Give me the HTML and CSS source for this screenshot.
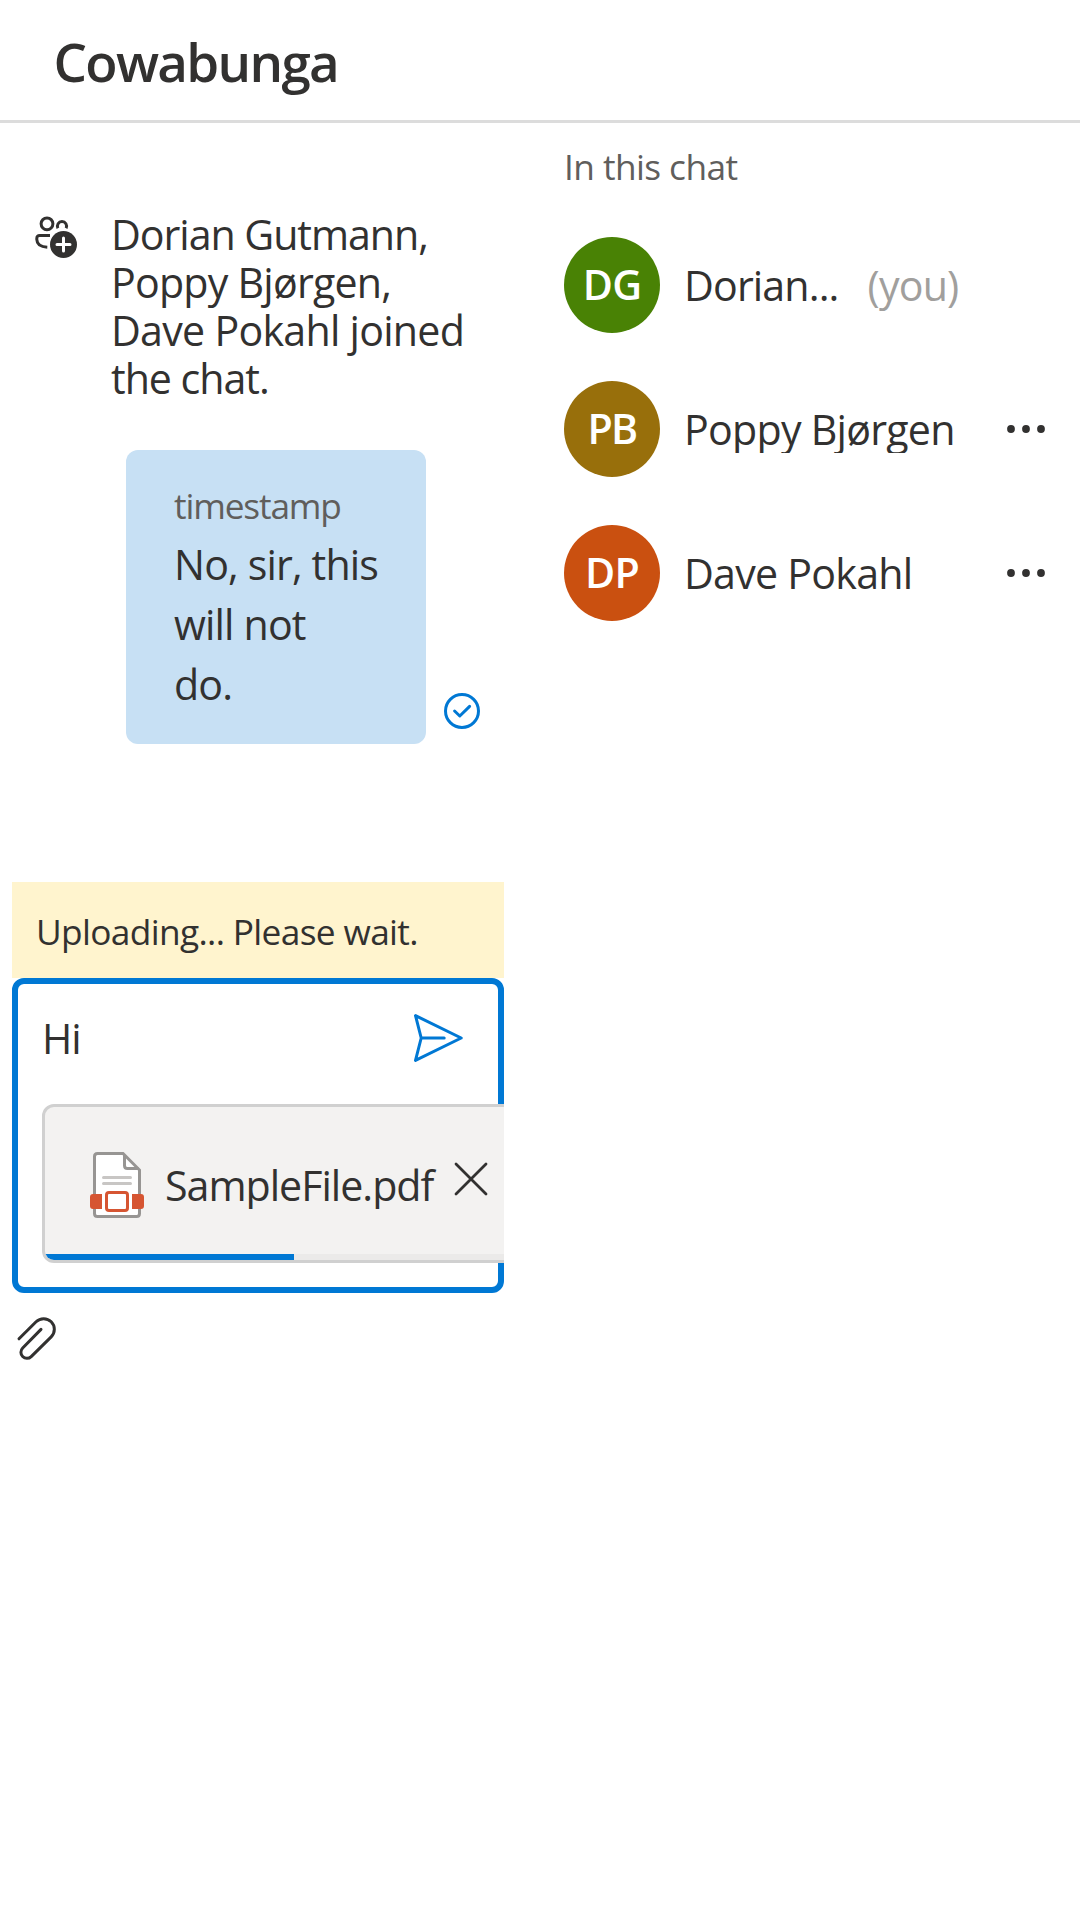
FILE: index.html
```html
<!DOCTYPE html>
<html lang="en">
<head>
<meta charset="utf-8">
<title>Cowabunga</title>
<link rel="stylesheet" href="styles.css">
</head>
<body>
<header class="header"><h1 class="title">Cowabunga</h1></header>
<main class="layout">
  <section class="chat">
    <div class="thread">
      <div class="system">
        <svg class="system-icon" width="44" height="44" viewBox="0 0 44 44" fill="none" stroke="#323130" stroke-width="3">
          <circle cx="12" cy="7.8" r="5.9"/>
          <path d="M22.9 12.2 A4.6 4.6 0 1 1 31.1 12.2"/>
          <path d="M15 19.5 H4.8 Q1.8 19.5 1.8 22.5 V23.5 Q2 30.7 12.3 31.2"/>
          <circle cx="28.5" cy="28.5" r="13.5" fill="#323130" stroke="none"/>
          <path d="M28.5 22 V35 M22 28.5 H35" stroke="#fff" stroke-linecap="round"/>
        </svg>
        <p class="system-text">
          <span class="line line-1">Dorian Gutmann,</span>
          <span class="line line-2">Poppy Bjørgen,</span>
          <span class="line line-3">Dave Pokahl joined</span>
          <span class="line line-4">the chat.</span>
        </p>
      </div>
      <div class="message">
        <div class="bubble">
          <div class="timestamp">timestamp</div>
          <div class="message-text">No, sir, this<br>will not<br>do.</div>
        </div>
        <svg class="status" width="36" height="36" viewBox="0 0 36 36" fill="none" stroke="#0078d4" stroke-width="3" stroke-linecap="round" stroke-linejoin="round">
          <circle cx="18" cy="18" r="16.5"/>
          <path d="M10.6 18 L15.8 23 L25.6 13.4"/>
        </svg>
      </div>
    </div>
    <div class="composer">
      <div class="banner">Uploading... Please wait.</div>
      <div class="box">
        <div class="input-row">
          <span class="input-text">Hi</span>
          <svg class="send" width="52" height="52" viewBox="0 0 52 52" fill="none" stroke="#0078d4" stroke-width="3" stroke-linecap="round" stroke-linejoin="round">
            <path d="M3.5 3.6 L49.2 26 L3.5 48.4 L9.2 26 Z M9.2 26 H32.2"/>
          </svg>
        </div>
        <div class="file-card">
          <div class="file-body">
            <svg class="file-icon" width="54" height="66" viewBox="0 0 54 66">
              <path d="M4.5 4.5 Q4.5 1.5 7.5 1.5 H33 L49.5 18 V61.5 Q49.5 64.5 46.5 64.5 H7.5 Q4.5 64.5 4.5 61.5 Z" fill="#fff" stroke="#979593" stroke-width="3"/>
              <path d="M34.5 3 V13.5 Q34.5 16.5 37.5 16.5 H48.5" fill="none" stroke="#979593" stroke-width="3"/>
              <path d="M13.5 25.5 H40.5 M13.5 31.5 H40.5" stroke="#c8c6c4" stroke-width="3" stroke-linecap="round"/>
              <path d="M12 42 H3 Q0 42 0 45 V54 Q0 57 3 57 H12 Z M42 42 H51 Q54 42 54 45 V54 Q54 57 51 57 H42 Z" fill="#d65532"/>
              <rect x="16.5" y="40.5" width="21" height="18" rx="2.5" fill="#fff" stroke="#d65532" stroke-width="3"/>
            </svg>
            <span class="file-name">SampleFile.pdf</span>
            <svg class="file-remove" width="36" height="36" viewBox="0 0 36 36" stroke="#323130" stroke-width="2.8" stroke-linecap="round">
              <path d="M3 3 L33 33 M33 3 L3 33"/>
            </svg>
          </div>
          <div class="progress"><div class="progress-bar" style="width: 50%"></div></div>
        </div>
      </div>
    </div>
    <svg class="attach" width="60" height="66" viewBox="0 0 60 66" fill="none" stroke="#323130" stroke-width="3" stroke-linecap="round">
      <path d="M9 33.8 L26.1 16.8 A10.67 10.67 0 0 1 41.2 31.9 L21.2 51.6 A6 6 0 0 1 12.7 43 L31 24.4"/>
    </svg>
  </section>
  <aside class="people">
    <h2 class="people-title">In this chat</h2>
    <ul class="people-list">
      <li class="person">
        <span class="avatar avatar-dg">DG</span>
        <span class="name name-short">Dorian...</span>
        <span class="you">(you)</span>
      </li>
      <li class="person">
        <span class="avatar avatar-pb">PB</span>
        <span class="name">Poppy Bjørgen</span>
        <svg class="more" width="42" height="12" viewBox="0 0 42 12" fill="#323130"><circle cx="6" cy="6" r="3.9"/><circle cx="21" cy="6" r="3.9"/><circle cx="36" cy="6" r="3.9"/></svg>
      </li>
      <li class="person">
        <span class="avatar avatar-dp">DP</span>
        <span class="name">Dave Pokahl</span>
        <svg class="more" width="42" height="12" viewBox="0 0 42 12" fill="#323130"><circle cx="6" cy="6" r="3.9"/><circle cx="21" cy="6" r="3.9"/><circle cx="36" cy="6" r="3.9"/></svg>
      </li>
    </ul>
  </aside>
</main>
</body>
</html>
```
FILE: styles.css
```css
* { box-sizing: border-box; }
body {
  margin: 0;
  background: #fff;
  color: #323130;
  font-family: "Open Sans", "Noto Sans", sans-serif;
  font-size: 41.16px;
  letter-spacing: -0.75px;
}
h1, h2, p, ul { margin: 0; padding: 0; font-weight: 400; }
svg { display: block; flex: none; }

.header {
  height: 123px;
  padding-left: 53.5px;
  border-bottom: 3px solid #dcdcdc;
}
.title {
  font-size: 52.9px;
  font-weight: 600;
  line-height: 122px;
  letter-spacing: -1.69px;
}

.layout { display: flex; gap: 48px; }
.chat { width: 516px; }
.thread { height: 759px; padding-top: 87px; }

.system { display: flex; padding-left: 35px; }
.system-icon { margin-top: 6px; }
.system-text { padding-left: 32px; line-height: 48px; }
.line { display: block; white-space: nowrap; }
.line-1 { letter-spacing: -1.05px; }
.line-2 { letter-spacing: -0.78px; }
.line-3 { letter-spacing: -0.74px; }
.line-4 { letter-spacing: -1.03px; }

.message {
  display: flex;
  align-items: flex-end;
  gap: 18px;
  margin-top: 48px;
  padding-left: 126px;
}
.bubble {
  width: 300px;
  height: 294px;
  padding: 30px 48px;
  border-radius: 12px;
  background: #c7e0f4;
}
.timestamp {
  color: #605e5c;
  font-size: 35.28px;
  line-height: 50px;
  letter-spacing: -1.15px;
}
.message-text {
  margin-top: 4px;
  line-height: 60px;
  letter-spacing: -0.85px;
  white-space: nowrap;
}
.status { margin-bottom: 15px; }

.composer { width: 504px; padding-left: 12px; overflow: hidden; }
.banner {
  height: 96px;
  padding-left: 24px;
  background: #fff4ce;
  font-size: 35.28px;
  line-height: 98px;
  letter-spacing: -0.65px;
}
.box {
  height: 315px;
  padding-left: 24px;
  border: 6px solid #0078d4;
  border-radius: 12px;
}
.input-row {
  display: flex;
  justify-content: space-between;
  height: 120px;
  padding: 24px 34px 0 0;
}
.input-text { line-height: 60px; letter-spacing: -1px; }
.send { margin-top: 4px; }
.file-card {
  width: 504px;
  height: 159px;
  border: 3px solid #d0d0d0;
  border-radius: 12px;
  background: #f3f2f1;
  overflow: hidden;
}
.file-body { display: flex; height: 147px; padding: 45px 0 0 45px; }
.file-name {
  height: 48px;
  width: 272px;
  margin: 9px 16px 0 21px;
  overflow: hidden;
  white-space: nowrap;
  line-height: 48px;
  letter-spacing: -1px;
}
.file-remove { margin-top: 9px; }
.progress { height: 6px; background: #ebeae9; }
.progress-bar { height: 6px; background: #0078d4; }
.attach { margin: 12px 0 0 10px; }

.people { flex: 1; }
.people-title {
  padding-top: 18px;
  color: #605e5c;
  font-size: 35.28px;
  line-height: 50px;
  letter-spacing: -0.58px;
}
.people-list {
  display: flex;
  flex-direction: column;
  gap: 48px;
  margin-top: 46px;
  list-style: none;
}
.person { display: flex; align-items: center; height: 96px; padding-right: 33px; }
.avatar {
  width: 96px;
  height: 96px;
  border-radius: 50%;
  color: #fff;
  font-weight: 600;
  line-height: 95px;
  text-align: center;
}
.avatar-dg { background: #498205; }
.avatar-pb { background: #986f0b; letter-spacing: -1.8px; }
.avatar-dp { background: #ca5010; }
.name {
  height: 48px;
  margin-left: 24px;
  overflow: hidden;
  white-space: nowrap;
  line-height: 48px;
}
.name-short { letter-spacing: -0.87px; }
.you { margin-left: 29px; height: 48px; line-height: 48px; color: #a19f9d; letter-spacing: -0.8px; }
.more { margin-left: auto; }
```
